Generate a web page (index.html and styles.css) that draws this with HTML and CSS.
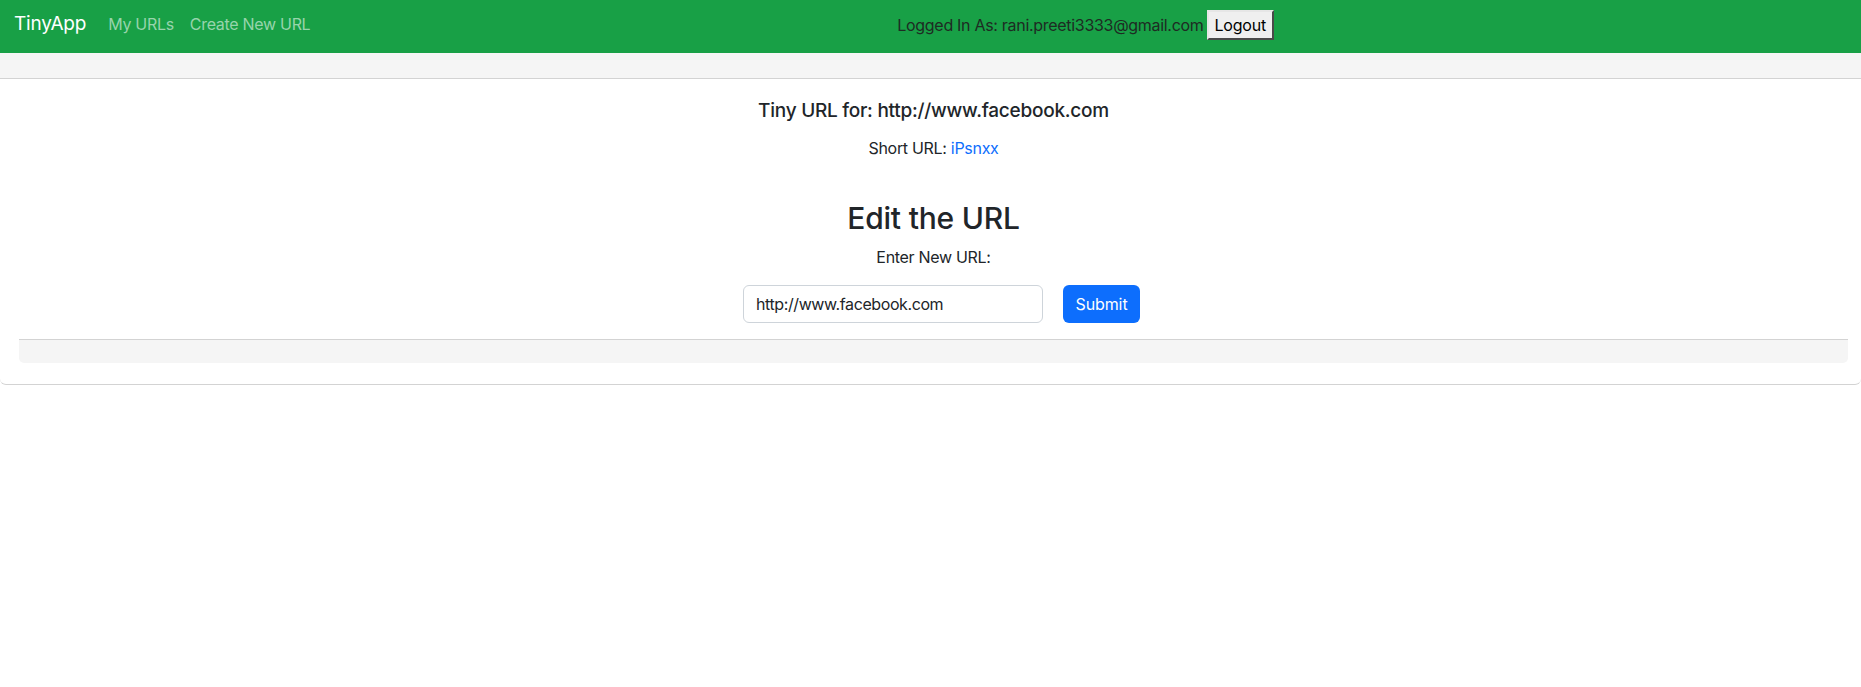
FILE: index.html
```html
<!DOCTYPE html>
<html lang="en">
<head>
<meta charset="utf-8">
<title>TinyApp</title>
<link rel="stylesheet" href="styles.css">
</head>
<body>
<nav class="navbar">
  <a class="brand" href="#">TinyApp</a>
  <div class="collapse">
    <ul class="nav-links">
      <li><a href="#">My URLs</a></li>
      <li><a href="#">Create New URL</a></li>
    </ul>
    <form class="login">
      <span class="login-text">Logged In As: rani.preeti3333@gmail.com</span>
      <button type="button" class="logout">Logout</button>
    </form>
    <div class="spacer"></div>
  </div>
</nav>
<div class="card">
  <div class="card-header"></div>
  <div class="card-body">
    <h5 class="card-title">Tiny URL for: http://www.facebook.com</h5>
    <p class="card-text">Short URL: <a href="#">iPsnxx</a></p>
    <h2 class="edit-title">Edit the URL</h2>
    <p class="label">Enter New URL:</p>
    <form class="edit-form">
      <input class="form-control" type="text" value="http://www.facebook.com">
      <button type="button" class="btn-primary">Submit</button>
    </form>
    <div class="card-footer"></div>
  </div>
</div>
</body>
</html>
```
FILE: styles.css
```css
* { box-sizing: border-box; }
html, body {
  margin: 0;
  padding: 0;
  background: #fff;
  font-family: Inter, "Liberation Sans", sans-serif;
  font-size: 16px;
  line-height: 1.5;
  letter-spacing: -0.3px;
  color: #212529;
}
a { text-decoration: none; }

.navbar {
  height: 53px;
  background: #18a046;
  display: flex;
  align-items: center;
  padding: 0 12px 0 14px;
}
.brand {
  color: #fff;
  font-size: 19px;
  line-height: 30px;
  letter-spacing: -0.2px;
  margin-right: 22px;
  margin-top: -6px;
}
.collapse {
  flex: 1;
  display: flex;
  align-items: center;
  justify-content: space-between;
}
.nav-links {
  list-style: none;
  margin: -6px 0 0 0;
  padding: 0;
  display: flex;
  gap: 16px;
}
.nav-links a {
  color: #97d4ac;
  font-size: 16px;
}
.login {
  display: flex;
  align-items: center;
  gap: 3px;
  margin: 0 0 0 12px;
}
.login-text {
  color: #1e2b23;
  font-size: 16px;
  margin-top: -3px;
}
.logout {
  font-family: Inter, "Liberation Sans", sans-serif;
  font-size: 16px;
  letter-spacing: -0.2px;
  line-height: 22px;
  height: 30px;
  background: #efefef;
  color: #000;
  border: 2px solid;
  border-color: #e6e6e6 #4a4a4a #4a4a4a #e6e6e6;
  padding: 2px 6px;
  margin-top: -4px;
}
.spacer { width: 0; }

.card {
  border-bottom: 1px solid #d3d3d3;
  border-radius: 0 0 6px 6px;
}
.card-header {
  height: 26px;
  background: #f5f5f5;
  border-bottom: 1px solid #d3d3d3;
}
.card-body {
  padding: 20px 13px 21px 19px;
  text-align: center;
}
.card-title {
  font-size: 19px;
  font-weight: 500;
  line-height: 24px;
  letter-spacing: -0.25px;
  margin: 0 0 13px 0;
}
.card-text {
  margin: 0;
  line-height: 24px;
}
.card-text a { color: #0d6efd; }
.edit-title {
  font-size: 30px;
  font-weight: 500;
  line-height: 38px;
  letter-spacing: -0.2px;
  margin: 39px 0 8px 0;
}
.label {
  margin: 0 0 16px 0;
  line-height: 24px;
}
.edit-form {
  display: flex;
  justify-content: center;
  gap: 20px;
  padding-left: 16px;
  margin: 0 0 16px 0;
}
.form-control {
  width: 300px;
  height: 38px;
  border: 1px solid #ced4da;
  border-radius: 6px;
  padding: 6px 12px;
  font-family: Inter, "Liberation Sans", sans-serif;
  font-size: 16px;
  letter-spacing: -0.4px;
  color: #212529;
}
.btn-primary {
  width: 77px;
  height: 38px;
  border: none;
  border-radius: 6px;
  background: #0d6efd;
  color: #fff;
  font-family: Inter, "Liberation Sans", sans-serif;
  font-size: 16px;
  letter-spacing: -0.1px;
}
.card-footer {
  height: 24px;
  background: #f5f5f5;
  border-top: 1px solid #d3d3d3;
  border-radius: 0 0 5px 5px;
}
```
